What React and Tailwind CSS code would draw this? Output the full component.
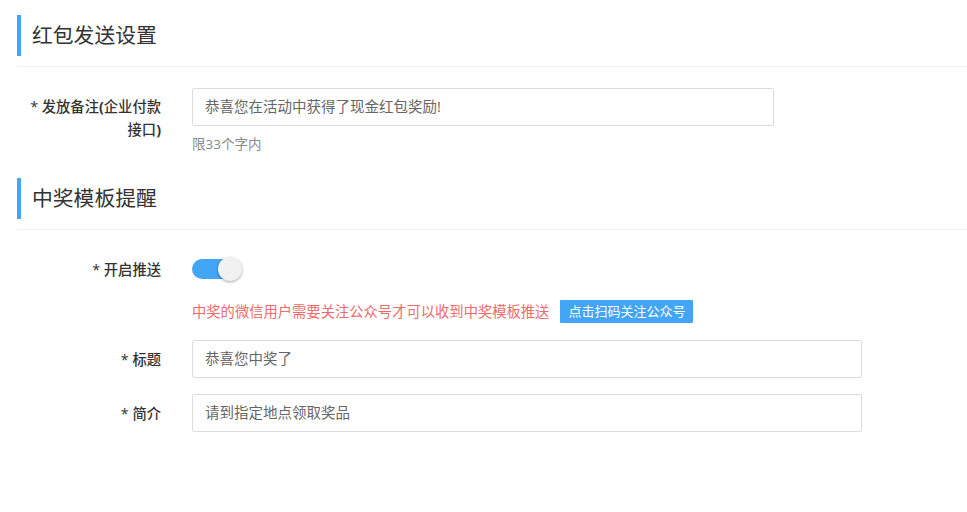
export default function App() {
  return (
    <div className="w-[967px] h-[512px] bg-white pl-[17px] pt-[15px] font-['Open_Sans','Noto_Sans_CJK_SC',sans-serif] text-[#333] overflow-hidden">
      {/* Section 1 header */}
      <div className="flex items-center h-[41px] border-l-4 border-[#42a5f5] pl-[11px] text-[20.8px] text-[#333]">
        红包发送设置
      </div>
      <div className="mt-[10px] h-px bg-[#f2f2f2]"></div>

      {/* Row: 发放备注 */}
      <div className="mt-[21px] flex">
        <div className="w-[132px] ml-[12px] text-right font-medium text-[14.3px] leading-[23px] pt-[7px] text-[#333]">
          * 发放备注<span className="font-bold">(</span>企业付款
          <br />
          接口<span className="font-bold">)</span>
        </div>
        <div className="ml-[31px] flex flex-col">
          <div className="w-[582px] h-[38px] border border-[#dcdcdc] rounded-[2px] px-[12px] flex items-center text-[14.5px] text-[#666]">
            恭喜您在活动中获得了现金红包奖励!
          </div>
          <div className="mt-[9px] text-[13.5px] leading-[18px] text-[#8a8a8a]">限33个字内</div>
        </div>
      </div>

      {/* Section 2 header */}
      <div className="mt-[25px] flex items-center h-[41px] border-l-4 border-[#42a5f5] pl-[11px] text-[20.8px] text-[#333]">
        中奖模板提醒
      </div>
      <div className="mt-[10px] h-px bg-[#f2f2f2]"></div>

      {/* Row: 开启推送 */}
      <div className="mt-[27px] flex items-center h-[24px]">
        <div className="w-[132px] ml-[12px] text-right font-medium text-[14.3px] leading-[23px] text-[#333]">
          * 开启推送
        </div>
        <div className="ml-[31px] relative w-[52px] h-[24px] flex items-center">
          <div className="w-[46px] h-[20px] rounded-full bg-[#42a5f5]"></div>
          <div className="absolute left-[26px] top-0 w-[24px] h-[24px] rounded-full bg-[#f1f1f1] shadow-[0_1px_3px_rgba(0,0,0,0.35)]"></div>
        </div>
      </div>

      {/* Red notice */}
      <div className="mt-[19px] ml-[175px] flex items-center h-[23px]">
        <span className="text-[14.3px] text-[#f06b6b]">中奖的微信用户需要关注公众号才可以收到中奖模板推送</span>
        <span className="ml-[11px] h-[23px] px-[8px] flex items-center bg-[#42a5f5] text-white text-[13px] rounded-[1px]">
          点击扫码关注公众号
        </span>
      </div>

      {/* Row: 标题 */}
      <div className="mt-[17px] flex items-center">
        <div className="w-[132px] ml-[12px] text-right font-medium text-[14.3px] leading-[23px] text-[#333]">
          * 标题
        </div>
        <div className="ml-[31px] w-[670px] h-[38px] border border-[#dcdcdc] rounded-[2px] px-[12px] flex items-center text-[14.5px] text-[#666]">
          恭喜您中奖了
        </div>
      </div>

      {/* Row: 简介 */}
      <div className="mt-[16px] flex items-center">
        <div className="w-[132px] ml-[12px] text-right font-medium text-[14.3px] leading-[23px] text-[#333]">
          * 简介
        </div>
        <div className="ml-[31px] w-[670px] h-[38px] border border-[#dcdcdc] rounded-[2px] px-[12px] flex items-center text-[14.5px] text-[#666]">
          请到指定地点领取奖品
        </div>
      </div>
    </div>
  );
}
